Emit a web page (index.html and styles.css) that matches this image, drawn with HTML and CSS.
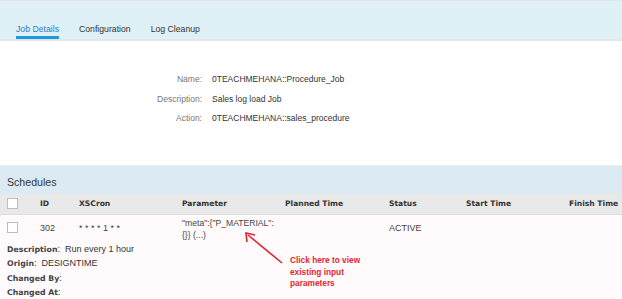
FILE: index.html
```html
<!DOCTYPE html>
<html lang="en">
<head>
    <meta charset="UTF-8">
    <title>Job Details</title>
    <link rel="stylesheet" href="styles.css">
</head>
<body>
    <div class="page">
        <div class="tabbar">
            <div class="tab active">Job Details</div>
            <div class="tab">Configuration</div>
            <div class="tab">Log Cleanup</div>
        </div>
        <div class="details">
            <span class="label">Name:</span><span class="value">0TEACHMEHANA::Procedure_Job</span>
            <span class="label">Description:</span><span class="value">Sales log load Job</span>
            <span class="label">Action:</span><span class="value">0TEACHMEHANA::sales_procedure</span>
        </div>
        <div class="section-title">Schedules</div>
        <div class="grid head">
            <div class="cell"><span class="check"></span></div>
            <div class="cell">ID</div>
            <div class="cell">XSCron</div>
            <div class="cell">Parameter</div>
            <div class="cell">Planned Time</div>
            <div class="cell">Status</div>
            <div class="cell">Start Time</div>
            <div class="cell">Finish Time</div>
        </div>
        <div class="row-wrap">
            <div class="grid row">
                <div class="cell"><span class="check"></span></div>
                <div class="cell">302</div>
                <div class="cell">* * * * 1 * *</div>
                <div class="cell param">"meta":{"P_MATERIAL":<br>{}} (...)</div>
                <div class="cell"></div>
                <div class="cell">ACTIVE</div>
                <div class="cell"></div>
                <div class="cell"></div>
            </div>
            <div class="meta">
                <div><b>Description</b>:&nbsp; Run every 1 hour</div>
                <div><b>Origin</b>:&nbsp; DESIGNTIME</div>
                <div><b>Changed By</b>:</div>
                <div><b>Changed At</b>:</div>
            </div>
            <svg class="arrow" width="60" height="40" viewBox="0 0 60 40">
                <line x1="40" y1="32" x2="6" y2="4" stroke="#e32228" stroke-width="1.6"/>
                <polyline points="5,11 4,2 13,4" fill="none" stroke="#e32228" stroke-width="1.6"/>
            </svg>
            <div class="callout">Click here to view<br>existing input<br>parameters</div>
        </div>
    </div>
</body>
</html>
```

FILE: styles.css
```css
body {
    margin: 0;
    font-family: "Liberation Sans", Arial, sans-serif;
    color: #333;
    background: #fff;
}
.page {
    width: 622px;
    height: 299px;
    overflow: hidden;
}
.tabbar {
    height: 38px;
    background: #dff1f7;
    border-top: 1px solid #e4e4e4;
    border-bottom: 2px solid #e3e7e9;
    display: flex;
    align-items: flex-end;
    padding-left: 16px;
    gap: 20px;
}
.tab {
    font-size: 8.7px;
    line-height: 11px;
    color: #333;
    padding-bottom: 1px;
    border-bottom: 3px solid transparent;
}
.tab.active {
    color: #2a7fc4;
    border-bottom-color: #1a9be0;
}
.details {
    height: 124px;
    display: grid;
    grid-template-columns: 202px auto;
    column-gap: 10px;
    row-gap: 8.5px;
    align-content: start;
    padding-top: 33px;
    box-sizing: border-box;
    font-size: 8.5px;
    line-height: 11px;
}
.label {
    text-align: right;
    color: #777;
}
.value {
    color: #333;
}
.section-title {
    height: 29px;
    box-sizing: border-box;
    background: #dcebf3;
    border-top: 1px solid #ececec;
    font-size: 10.6px;
    line-height: 25px;
    padding-top: 4px;
    padding-left: 7px;
    color: #333;
}
.grid {
    display: grid;
    grid-template-columns: 40px 39px 103px 103px 104px 77px 103px 53px;
}
.head {
    height: 20px;
    background: #e9e9e9;
    border-bottom: 1px solid #dcdcdc;
    font-family: "DejaVu Sans", Verdana, sans-serif;
    font-weight: bold;
    font-size: 7.6px;
    line-height: 20px;
    color: #333;
}
.head .cell:first-child,
.row .cell:first-child {
    padding-left: 7px;
}
.check {
    display: inline-block;
    width: 9px;
    height: 9px;
    background: #fff;
    border: 1px solid #bdbdbd;
    vertical-align: middle;
}
.row-wrap {
    position: relative;
    background: #fffbfd;
    height: 90px;
}
.row {
    font-size: 9px;
    line-height: 12px;
    color: #444;
}
.row .cell {
    padding-top: 7px;
}
.row .cell:first-child {
    padding-top: 6px;
}
.row .param {
    padding-top: 2px;
    font-size: 8.6px;
}
.meta {
    margin-top: 1px;
    padding-left: 7px;
    font-size: 9px;
    color: #333;
}
.meta div {
    height: 14.3px;
    line-height: 14.3px;
}
.meta b {
    font-family: "DejaVu Sans", Verdana, sans-serif;
    font-size: 7.8px;
    line-height: 10px;
    color: #444;
}
.arrow {
    position: absolute;
    left: 242px;
    top: 16px;
}
.callout {
    position: absolute;
    left: 290px;
    top: 40px;
    font-size: 8.3px;
    line-height: 11.5px;
    font-weight: bold;
    color: #e5262d;
}
```
